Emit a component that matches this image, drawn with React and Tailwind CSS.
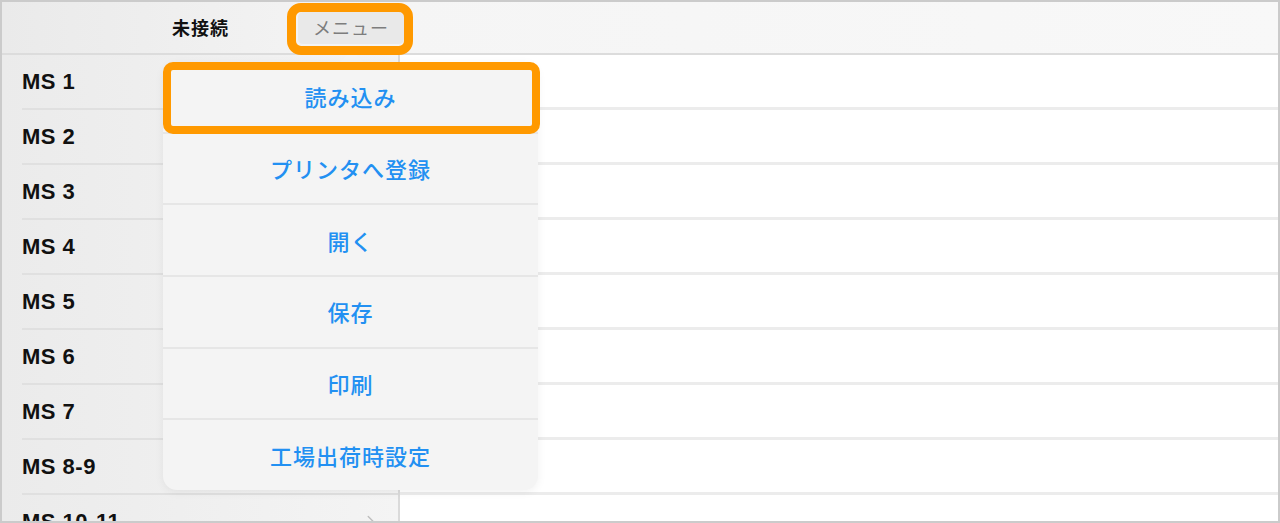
import { ChevronRight } from "lucide-react"

const rows = ["MS 1", "MS 2", "MS 3", "MS 4", "MS 5", "MS 6", "MS 7", "MS 8-9", "MS 10-11"]
const menuItems = ["読み込み", "プリンタへ登録", "開く", "保存", "印刷", "工場出荷時設定"]

const jp = { fontFamily: '"Noto Sans CJK JP", "Noto Sans", sans-serif' }

export default function App() {
  return (
    <div
      className="relative w-[1280px] h-[523px] overflow-hidden border-2 border-[#cbcbcb] bg-white"
      style={jp}
    >
      {/* Header */}
      <div className="flex items-center h-[53px] pl-[170px] border-b-2 border-[#dcdcdc] bg-gradient-to-r from-[#eaeaea] via-[#f5f5f5] via-30% to-[#f8f8f8]">
        <span className="text-[18px] font-bold tracking-[1px] text-[#111]">未接続</span>
        <button className="ml-[68px] w-[108px] h-[34px] rounded-[6px] bg-[#e9e9e9] border border-[#f4f4f4] text-[18px] tracking-[1px] text-[#7d7d7d]">
          メニュー
        </button>
      </div>

      {/* Body */}
      <div className="flex h-[466px]">
        {/* Sidebar list */}
        <div className="w-[398px] shrink-0 border-r-2 border-[#dadada] bg-gradient-to-r from-[#ebebeb] to-[#f4f4f4]">
          {rows.map((r) => (
            <div key={r} className="pl-[20px]">
              <div className="flex items-center justify-between h-[55px] pr-[16px] border-b-2 border-[#e0e0e0]">
                <span
                  className="text-[22px] font-bold tracking-[0.5px] text-[#111]"
                  style={{ fontFamily: '"Liberation Sans", Arial, sans-serif' }}
                >
                  {r}
                </span>
                <ChevronRight size={22} strokeWidth={1.5} className="text-[#bdbdbd]" />
              </div>
            </div>
          ))}
        </div>

        {/* Detail rows */}
        <div className="flex-1">
          {rows.map((r) => (
            <div key={r} className="h-[55px] border-b-[3px] border-[#ececec]" />
          ))}
        </div>
      </div>

      {/* Popover menu */}
      <div className="absolute left-[161px] top-[60px] w-[375px] h-[428px]">
        <div className="absolute left-[180px] -top-[8px] w-[18px] h-[18px] rotate-45 bg-[#f4f4f4]" />
        <div className="relative flex flex-col h-full rounded-[14px] bg-[#f4f4f4] shadow-[0_2px_10px_rgba(0,0,0,0.06)] overflow-hidden">
          {menuItems.map((m, i) => (
            <div
              key={m}
              className={`flex-1 flex items-center justify-center text-[22px] font-medium tracking-[1px] text-[#2290f2] ${
                i < menuItems.length - 1 ? "border-b-2 border-[#e6e6e6]" : ""
              }`}
            >
              {m}
            </div>
          ))}
        </div>
      </div>

      {/* Orange annotations */}
      <div className="absolute left-[285px] top-[1px] w-[126px] h-[52px] rounded-[14px] border-[9px] border-[#ff9900]" />
      <div className="absolute left-[161px] top-[60px] w-[377px] h-[72px] rounded-[10px] border-[8px] border-[#ff9900]" />
    </div>
  )
}
